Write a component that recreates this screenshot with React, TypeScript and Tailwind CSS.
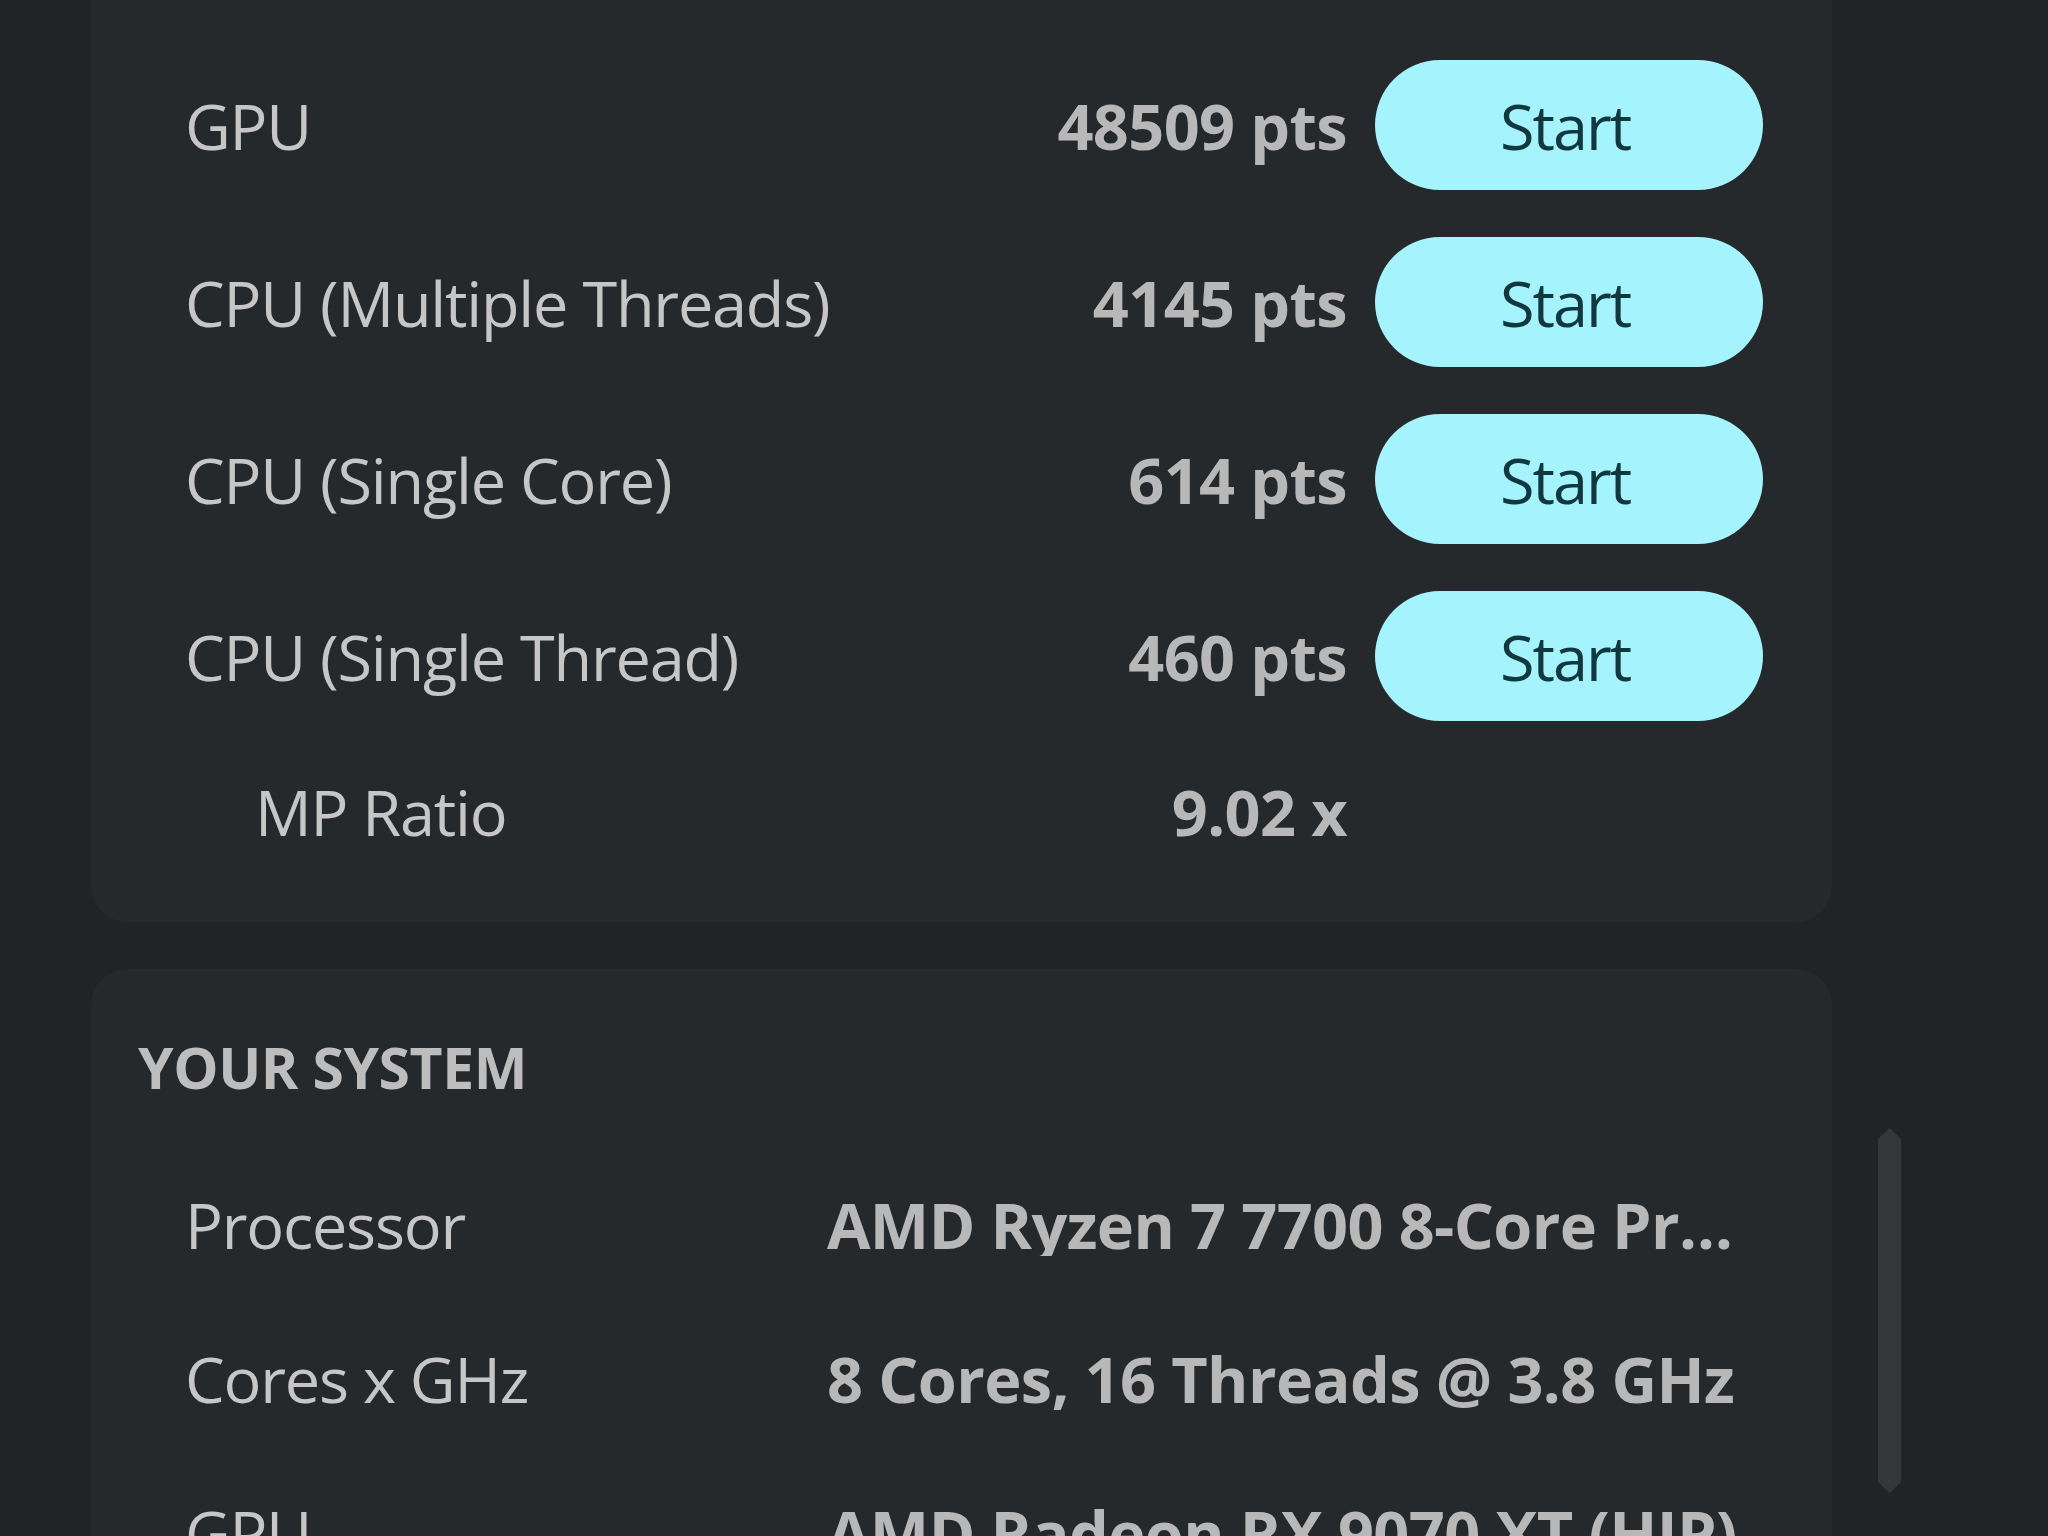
const scores = [
  { label: 'GPU', value: '48509 pts' },
  { label: 'CPU (Multiple Threads)', value: '4145 pts' },
  { label: 'CPU (Single Core)', value: '614 pts' },
  { label: 'CPU (Single Thread)', value: '460 pts' },
]

const system = [
  { label: 'Processor', value: 'AMD Ryzen 7 7700 8-Core Processor' },
  { label: 'Cores x GHz', value: '8 Cores, 16 Threads @ 3.8 GHz' },
  { label: 'GPU', value: 'AMD Radeon RX 9070 XT (HIP)' },
]

const font = { fontFamily: '"Open Sans", "Noto Sans", sans-serif' }

export default function App() {
  return (
    <div className="flex h-[1536px] w-[2048px] overflow-hidden bg-[#212426]" style={font}>
      <div className="ml-[91px] flex w-[1741px] flex-col">
        {/* Scores */}
        <div className="flex flex-col gap-[47px] rounded-b-[36px] bg-[#26292b] pb-[68px] pl-[94px] pr-[69px] pt-[60px]">
          {scores.map(s => (
            <div key={s.label} className="flex h-[130px] items-center">
              <span className="flex-1 text-[63px] leading-none tracking-[-1.2px] text-[#c6c6c6]">{s.label}</span>
              <span className="text-[63px] font-bold leading-none tracking-[-0.6px] text-[#b8b8b8]">{s.value}</span>
              <button className="ml-[28px] flex h-[130px] w-[388px] items-center justify-center rounded-full bg-[#a5f3fc] pr-[8px] text-[63px] leading-none tracking-[-2px] text-[#10383e]">
                Start
              </button>
            </div>
          ))}
          <div className="flex h-[86px] items-center">
            <span className="flex-1 pl-[70px] text-[63px] leading-none tracking-[-1.2px] text-[#c6c6c6]">MP Ratio</span>
            <span className="text-[63px] font-bold leading-none tracking-[-0.6px] text-[#b8b8b8]">9.02 x</span>
            <div className="ml-[28px] w-[388px]" />
          </div>
        </div>

        {/* Your system */}
        <div className="mt-[47px] flex-1 rounded-t-[36px] bg-[#26292b] pl-[47px] pr-[69px] pt-[70px]">
          <h2 className="h-[57px] text-[57px] font-bold uppercase leading-none tracking-[-0.4px] text-[#bdbdbd]">Your System</h2>
          <div className="mt-[51px] pl-[47px]">
            {system.map(r => (
              <div key={r.label} className="grid h-[154px] grid-cols-[642px_1fr] items-center">
                <span className="text-[63px] leading-none tracking-[-1.2px] text-[#c6c6c6]">{r.label}</span>
                <span className="truncate text-[63px] font-bold leading-none tracking-[-0.6px] text-[#b8b8b8]">{r.value}</span>
              </div>
            ))}
          </div>
        </div>
      </div>

      {/* scrollbar */}
      <div className="ml-[46px] w-[23px] pt-[1128px]">
        <svg width="23" height="365" viewBox="0 0 23 365">
          <polygon points="11.5,0 23,11 23,354 11.5,365 0,354 0,11" fill="#363738" />
        </svg>
      </div>
    </div>
  )
}
